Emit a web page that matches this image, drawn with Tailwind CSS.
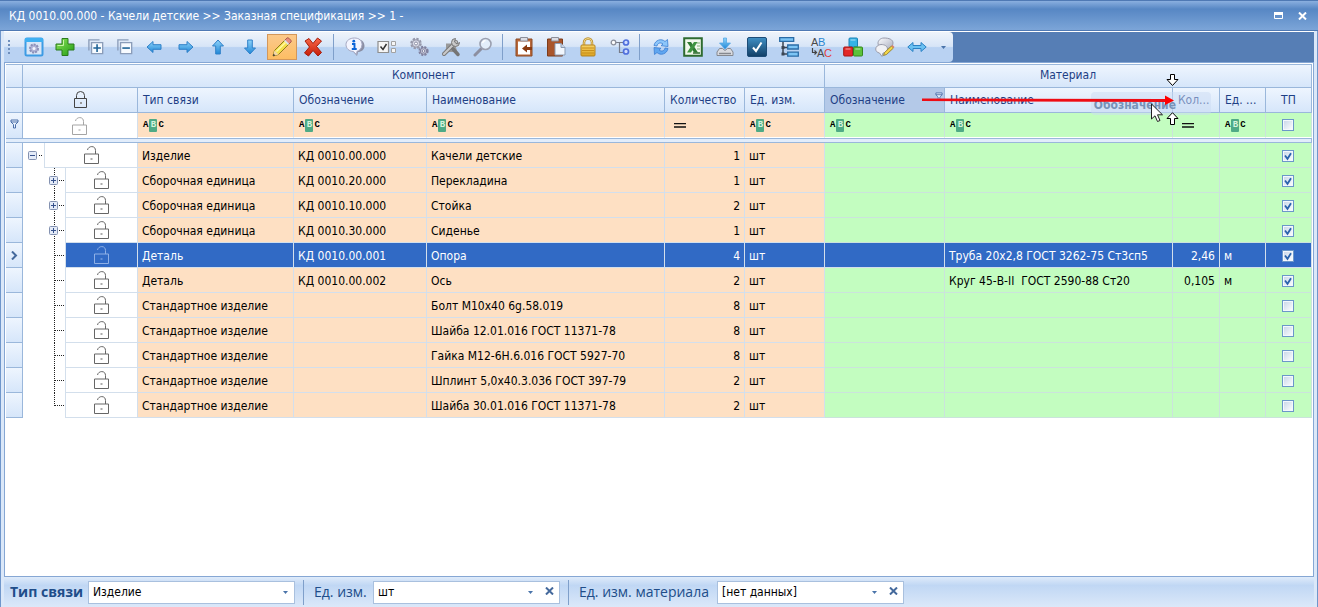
<!DOCTYPE html>
<html lang="ru">
<head>
<meta charset="utf-8">
<meta name="viewport" content="width=device-width, initial-scale=1">
<title>КД 0010.00.000 - Качели детские</title>
<script src="https://cdn.jsdelivr.net/npm/@tailwindcss/browser@4"></script>
</head>
<body class="flex min-h-screen flex-col bg-[#dbe8f9] text-xs text-black [font-family:'DejaVu_Sans_Condensed','DejaVu_Sans',sans-serif]">

<svg class="absolute size-0" aria-hidden="true">
  <defs>
    <linearGradient id="blue" x1="0" y1="0" x2="0" y2="1"><stop offset="0" stop-color="#8fd4fa"/><stop offset="1" stop-color="#1f86d6"/></linearGradient>
    <linearGradient id="green" x1="0" y1="0" x2="1" y2="1"><stop offset="0" stop-color="#8fe65a"/><stop offset="1" stop-color="#1f9a14"/></linearGradient>
    <linearGradient id="red" x1="0" y1="0" x2="0" y2="1"><stop offset="0" stop-color="#f9694a"/><stop offset="1" stop-color="#c61c08"/></linearGradient>
    <linearGradient id="gold" x1="0" y1="0" x2="0" y2="1"><stop offset="0" stop-color="#f7d469"/><stop offset="1" stop-color="#dba21f"/></linearGradient>
    <linearGradient id="navy" x1="0" y1="0" x2="0" y2="1"><stop offset="0" stop-color="#3f8fc4"/><stop offset="1" stop-color="#123f66"/></linearGradient>
    <linearGradient id="grey" x1="0" y1="0" x2="1" y2="1"><stop offset="0" stop-color="#fdfdff"/><stop offset="1" stop-color="#a9adc0"/></linearGradient>
  </defs>
  <symbol id="lock" viewBox="0 0 15 18"><path d="M3.500 7V4.500a3.500 3.500 0 0 1 8 0V7" fill="none" stroke="#444"/><path d="M1.500 7.500h12v9h-12z" fill="none" stroke="#444"/><path d="M7 11h2v2H7z" fill="#999"/></symbol>
  <symbol id="unlock" viewBox="0 0 15 18"><path d="M3.500 4C4 1.600 6 .6 7.800 .6c2.400 0 3.700 1.600 3.700 4V8" fill="none" stroke="currentColor"/><path d="M.5 8h14v9.500h-14z" fill="none" stroke="currentColor"/><path d="M6.500 12h2v2h-2z" fill="currentColor" opacity=".55"/></symbol>
  <symbol id="funnel" viewBox="0 0 9 10"><path d="M1 1h7v2L5.500 5.500V9h-2V5.500L1 3z" fill="#eaf2fd" stroke="#4a6ea9"/><path d="M1 3h7" stroke="#4a6ea9"/></symbol>
  <symbol id="tri" viewBox="0 0 5 3"><path d="M0 0h5L2.500 3z" fill="#4a74aa"/></symbol>
  <symbol id="cross" viewBox="0 0 9 8"><path d="M1 .5l7 7M8 .5l-7 7" stroke="#44699c" stroke-width="2"/></symbol>
</svg>

<header class="flex h-[31px] shrink-0 items-center border-y border-[#4f79b4] bg-linear-to-b from-[#8aafdf] from-0% via-[#5787c4] via-28% to-[#7ca5d8] pr-1 pl-[9px] text-white">
  <h1 class="flex-1 truncate pt-px text-xs">КД 0010.00.000 - Качели детские &gt;&gt; Заказная спецификация &gt;&gt; 1 -</h1>
  <button type="button" aria-label="Развернуть" class="flex h-5 w-6 items-center justify-center"><svg class="h-2 w-[9px]" viewBox="0 0 9 8"><path d="M.5.500h8v6h-8z" fill="none" stroke="#fff"/><path d="M0 0h9v3H0z" fill="#fff"/></svg></button>
  <button type="button" aria-label="Закрыть" class="flex h-5 w-6 items-center justify-center"><svg class="h-2 w-[9px]" viewBox="0 0 9 8"><path d="M1 .5l7 7M8 .5l-7 7" stroke="#fff" stroke-width="2"/></svg></button>
</header>

<div class="flex flex-1 flex-col border-x border-[#6f96cb] px-[3px]">
  <div class="flex h-[31px] shrink-0 border-t border-white bg-[#567eb5]">
    <div role="toolbar" class="flex items-center rounded-r-sm bg-linear-to-b from-[#eff4fb] from-0% via-[#d7e5f7] via-48% to-[#b9d2f2] to-52%" id="toolbar">
      <svg class="mr-[7px] ml-1 h-[15px] w-[3px]" viewBox="0 0 3 15"><path d="M1 0v15" stroke="#6f8fbd" stroke-width="2" stroke-dasharray="2 2"/></svg>
      <button type="button" aria-label="Настройки" class="flex h-7 w-8 items-center justify-center"><svg class="size-5" viewBox="0 0 20 20"><rect x="1.500" y="1.500" width="17" height="17" rx="1.500" fill="#d9e6f7" stroke="#3d9be4" stroke-width="2"/><path d="M1 1h18v4H1z" fill="#3fb0f2"/><circle cx="10" cy="11.500" r="4" fill="#aeb3d6" stroke="#8b8fb8" stroke-width="2" stroke-dasharray="2 1"/><circle cx="10" cy="11.500" r="1.500" fill="#f4f6ff"/></svg></button>
      <button type="button" aria-label="Добавить" class="flex h-7 w-[30px] items-center justify-center"><svg class="size-5" viewBox="0 0 20 20"><path d="M7 1.500h6V7h6v6h-6v5.500H7V13H1V7h6z" fill="url(#green)" stroke="#2b7a1c" stroke-linejoin="round"/><path d="M8.500 3v5.500h-6" fill="none" stroke="#c6f5a4"/></svg></button>
      <button type="button" aria-label="Развернуть все" class="flex h-7 w-[31px] items-center justify-center"><svg class="size-4" viewBox="0 0 18 18"><path d="M1 13V1h12" fill="none" stroke="#8b9db9" stroke-width="1.500"/><path d="M4 4h12.500v12.500H4z" fill="#f7fbff" stroke="#8b9db9" stroke-width="1.500"/><path d="M6 10.200h8.500M10.200 6v8.500" stroke="#1f6396" stroke-width="1.800"/></svg></button>
      <button type="button" aria-label="Свернуть все" class="flex h-7 w-[27px] items-center justify-center"><svg class="size-4" viewBox="0 0 18 18"><path d="M1 13V1h12" fill="none" stroke="#8b9db9" stroke-width="1.500"/><path d="M4 4h12.500v12.500H4z" fill="#f7fbff" stroke="#8b9db9" stroke-width="1.500"/><path d="M6 10.200h8.500" stroke="#1f6396" stroke-width="1.800"/></svg></button>
      <button type="button" aria-label="Влево" class="flex h-7 w-8 items-center justify-center"><svg class="size-4" viewBox="0 0 16 16"><path d="M1 8l6-5.500v3.200h8v4.600H7v3.200z" fill="url(#blue)" stroke="#2f80c8" stroke-linejoin="round"/></svg></button>
      <button type="button" aria-label="Вправо" class="flex h-7 w-8 items-center justify-center"><svg class="size-4" viewBox="0 0 16 16"><path d="M15 8L9 2.500v3.200H1v4.600h8v3.200z" fill="url(#blue)" stroke="#2f80c8" stroke-linejoin="round"/></svg></button>
      <button type="button" aria-label="Вверх" class="flex h-7 w-8 items-center justify-center"><svg class="size-4" viewBox="0 0 16 16"><path d="M8 1l5.500 6h-3.200v8H5.700V7H2.500z" fill="url(#blue)" stroke="#2f80c8" stroke-linejoin="round"/></svg></button>
      <button type="button" aria-label="Вниз" class="flex h-7 w-8 items-center justify-center"><svg class="size-4" viewBox="0 0 16 16"><path d="M8 15l5.500-6h-3.200V1H5.700v8H2.500z" fill="url(#blue)" stroke="#2f80c8" stroke-linejoin="round"/></svg></button>
      <button type="button" aria-label="Редактировать" aria-pressed="true" class="ml-px flex h-[26px] w-[30px] items-center justify-center border border-[#d3975a] bg-linear-to-b from-[#fbc98b] to-[#fdbd63]"><svg class="size-[22px]" viewBox="0 0 22 22"><path d="M2 20l1.500-5.500L15.500 2.500l4 4L7.500 18.500z" fill="#f4e04a" stroke="#8f7a1c"/><path d="M14 4l1.800-1.800q1-1 2 0l2 2q1 1 0 2L18 8z" fill="#e98b7d" stroke="#a8574b"/><path d="M13 5l4 4 1.200-1.200-4-4z" fill="#dfe3ea"/><path d="M2 20l1.500-5.500 4 4z" fill="#f3d7a5"/><path d="M2 20l.6-2.200 1.600 1.600z" fill="#222"/><path d="M5.500 15.500l9-9" stroke="#fff9a8" stroke-width="1.500"/></svg></button>
      <button type="button" aria-label="Удалить" class="flex h-7 w-8 items-center justify-center"><svg class="size-5" viewBox="0 0 20 20"><path d="M2 4l4-2.500 4 5 4.500-5.500L18.500 4 13.500 9.500l5 6-3.500 3.500-5-5.500L5.500 19 1.500 16 6.500 10z" fill="url(#red)" stroke="#a51c0c" stroke-linejoin="round"/></svg></button>
      <span class="mr-[5px] ml-1 h-[26px] w-px bg-[#7f9fca]"></span>
      <button type="button" aria-label="Информация" class="flex h-7 w-8 items-center justify-center"><svg class="size-5" viewBox="0 0 20 20"><path d="M11 2c5 0 8.500 2.500 8.500 7S15 15 13 15l-1 4-4-4.500z" fill="#8a8ea3"/><path d="M9.500 1C14 1 17 3.500 17 7.500S14 14 12 14.300l-.5 3.200L8.300 14.500C4 14.200 1 11.500 1 7.500S5 1 9.500 1z" fill="#f4f5ff" stroke="#a5a8c2"/><circle cx="8.800" cy="4.200" r="1.400" fill="#0b64d8"/><path d="M7 7h2.500v5M6.800 12h4.900" stroke="#0b64d8" stroke-width="1.900" fill="none"/></svg></button>
      <button type="button" aria-label="Отметить" class="flex h-7 w-8 items-center justify-center"><svg class="h-[14px] w-5" viewBox="0 0 20 14"><path d="M1 1.500h10.500v11H1z" fill="#f6f6f6" stroke="#8e8e8e" stroke-width="1.200"/><path d="M3.500 6.500l2.500 3L9.500 4" fill="none" stroke="#333" stroke-width="1.500"/><path d="M14.500 1.500h4v4h-4zM14.500 8.500h4v4h-4z" fill="#f6f6f6" stroke="#a2a2a2"/></svg></button>
      <button type="button" aria-label="Параметры" class="flex h-7 w-8 items-center justify-center"><svg class="size-5" viewBox="0 0 20 20"><circle cx="7" cy="6.500" r="4.500" fill="#c5c7d4" stroke="#9698aa" stroke-width="2.500" stroke-dasharray="2.200 1.300"/><circle cx="7" cy="6.500" r="3.700" fill="#d9dae6" stroke="#9698aa"/><circle cx="7" cy="6.500" r="1.500" fill="#fff" stroke="#8d8fa5"/><circle cx="14.500" cy="14" r="4" fill="#c5c7d4" stroke="#8082a0" stroke-width="2.300" stroke-dasharray="2 1.200"/><circle cx="14.500" cy="14" r="3.200" fill="#c3c5d6" stroke="#8082a0"/><circle cx="14.500" cy="14" r="1.300" fill="#fff" stroke="#8082a0"/></svg></button>
      <button type="button" aria-label="Инструменты" class="flex h-7 w-8 items-center justify-center"><svg class="size-5" viewBox="0 0 20 20"><path d="M5 6.500h10v4l2.500 7.500-5-3H8l-6 2 3-5z" fill="#9a9a9a"/><path d="M3 17L15 5" stroke="#777" stroke-width="4" stroke-linecap="round"/><path d="M3 17L15 5" stroke="#c9c9c9" stroke-width="2.200" stroke-linecap="round"/><path d="M14.500 1.500a4 4 0 1 0 4 4L16 7l-2.500-2z" fill="#c9c9c9" stroke="#777"/><path d="M12 12l5 5.500" stroke="#757575" stroke-width="3.500" stroke-linecap="round"/></svg></button>
      <button type="button" aria-label="Поиск" class="flex h-7 w-8 items-center justify-center"><svg class="size-5" viewBox="0 0 20 20"><path d="M2 18l6-6" stroke="#8c8fa0" stroke-width="3" stroke-linecap="round"/><circle cx="12.500" cy="7" r="5.500" fill="#e3eefb" stroke="#9ba0b0" stroke-width="1.600"/><path d="M9.500 6a3.500 3.500 0 0 1 3-2.500" stroke="#fff" stroke-width="1.500" fill="none"/></svg></button>
      <span class="mr-[5px] ml-[3px] h-[26px] w-px bg-[#7f9fca]"></span>
      <button type="button" aria-label="Вырезать" class="flex h-7 w-8 items-center justify-center"><svg class="size-5" viewBox="0 0 20 20"><path d="M2 2h16v17H2z" fill="#b9683a" stroke="#8c4a25"/><path d="M4 4.500h12v13H4z" fill="#fff"/><path d="M6.500.500h7V4h-7z" fill="#dcdde4" stroke="#8d8e99"/><path d="M8 11.500l5-4v2.500h5v3h-5v2.500z" fill="#8a3a10"/></svg></button>
      <button type="button" aria-label="Вставить" class="flex h-7 w-8 items-center justify-center"><svg class="size-5" viewBox="0 0 20 20"><path d="M1.500 2h15v17h-15z" fill="#a9552b" stroke="#7d3c1b"/><path d="M5.500.500h7V4h-7z" fill="#dcdde4" stroke="#8d8e99"/><path d="M9 6.500h6l4 4v7.500H9z" fill="#f1f6fd" stroke="#8b9cb3"/><path d="M15 6.500v4h4" fill="#c6d6ea" stroke="#8b9cb3"/></svg></button>
      <button type="button" aria-label="Заблокировать" class="flex h-7 w-8 items-center justify-center"><svg class="size-5" viewBox="0 0 20 20"><path d="M6 9V5.500a4 4 0 0 1 8 0V9" fill="none" stroke="#b98d2d" stroke-width="2.500"/><path d="M6 9V5.500a4 4 0 0 1 8 0V9" fill="none" stroke="#f4dc8c"/><rect x="3" y="8" width="14" height="11" rx="1" fill="url(#gold)" stroke="#b58320"/><path d="M4 11h12M4 13.500h12M4 16h12" stroke="#c98f1a"/></svg></button>
      <button type="button" aria-label="Структура" class="flex h-7 w-8 items-center justify-center"><svg class="size-5" viewBox="0 0 20 20"><path d="M5 5.500h9M9.500 5.500v10H14" fill="none" stroke="#777c8a" stroke-width="1.200"/><circle cx="3.500" cy="5.500" r="2.300" fill="#fff" stroke="#8b8f9b" stroke-width="1.300"/><circle cx="16" cy="5.500" r="2.500" fill="#cfdcff" stroke="#4f6fdc" stroke-width="1.700"/><circle cx="16" cy="14.500" r="2.500" fill="#cfdcff" stroke="#4f6fdc" stroke-width="1.700"/></svg></button>
      <span class="mr-[5px] ml-[3px] h-[26px] w-px bg-[#7f9fca]"></span>
      <button type="button" aria-label="Обновить" class="flex h-7 w-8 items-center justify-center"><svg class="size-5" viewBox="0 0 20 20"><path d="M3 8.500C4 3 10.500 1 14 4.500l2.500-2 .5 7-7-.8 2-1.700C9.500 5 6.500 6 6 9z" fill="#8cc6fa" stroke="#3b7ed2" stroke-width=".8" stroke-linejoin="round"/><path d="M17 11.500c-1 5.500-7.500 7.500-11 4l-2.500 2-.5-7 7 .8-2 1.700c2.500 2 5.500 1 6-2z" fill="#5fa6f0" stroke="#3b7ed2" stroke-width=".8" stroke-linejoin="round"/></svg></button>
      <button type="button" aria-label="Экспорт в Excel" class="flex h-7 w-8 items-center justify-center"><svg class="size-5" viewBox="0 0 20 20"><path d="M1.200 1.200h17.600v17.600H1.200z" fill="#f1f8ec" stroke="#2e6b30" stroke-width="2"/><path d="M14 6h3M14 9h3M14 12h3" stroke="#7faf74"/><path d="M4 5h4l7 10.500h-4z" fill="#2f7a33"/><path d="M14.500 5h-3.500L4 15.500h4z" fill="#3f9440"/><path d="M10 16h7" stroke="#2e6b30" stroke-width="1.500"/></svg></button>
      <button type="button" aria-label="Загрузить" class="flex h-7 w-8 items-center justify-center"><svg class="size-5" viewBox="0 0 20 20"><path d="M8.500 1h3v5h4L10 12 4.500 6h4z" fill="url(#blue)" stroke="#4aa3e4" stroke-width=".7"/><path d="M4.500 11.500h3l2.500 2 2.500-2h3L18 15v3.500H2V15z" fill="#d9dbe1" stroke="#85888f"/><path d="M4 16.500h12" stroke="#85888f" stroke-width="1.500"/></svg></button>
      <button type="button" aria-label="Принять" class="flex h-7 w-8 items-center justify-center"><svg class="size-5" viewBox="0 0 20 20"><rect x=".5" y=".5" width="19" height="19" rx="1.500" fill="url(#navy)" stroke="#1d4c77"/><path d="M6 10.500l3 3.500L14.500 5.500" fill="none" stroke="#fff" stroke-width="2"/></svg></button>
      <button type="button" aria-label="Дерево" class="flex h-7 w-8 items-center justify-center"><svg class="size-5" viewBox="0 0 20 20"><path d="M4 4v13h5M4 10.500h5" fill="none" stroke="#3b4553" stroke-width="1.500"/><path d="M.7.700h14v3.600H.7zM8.700 8h10.600v4H8.700zM8.700 15.200h10.600v4H8.700z" fill="#7cc5f5" stroke="#2a6ca6" stroke-width="1.300"/><path d="M2.500 9h3v3h-3zM2.500 15.500h3v3h-3z" fill="#3b4553"/></svg></button>
      <button type="button" aria-label="Переименовать" class="flex h-7 w-8 items-center justify-center"><svg class="h-[22px] w-[22px] [font-family:'Liberation_Sans',sans-serif]" viewBox="0 0 22 22" font-size="11"><text x="1" y="10" fill="#4a4a4a">A</text><text x="8" y="10" fill="#2a86cf">B</text><text x="7" y="21" fill="#4a4a4a">A</text><text x="14" y="21" fill="#e24040">C</text><path d="M2.500 12v4.500H6M4.500 14.500l2 2-2 2" fill="none" stroke="#444" stroke-width="1.200"/></svg></button>
      <button type="button" aria-label="Материалы" class="flex h-7 w-8 items-center justify-center"><svg class="size-5" viewBox="0 0 20 20"><rect x="6" y="1" width="8.500" height="9" rx="1" fill="#35b3e6" stroke="#1b83b5"/><rect x=".7" y="10" width="9" height="9" rx="1" fill="#e32828" stroke="#a51414"/><rect x="10.500" y="10" width="9" height="9" rx="1" fill="#5cc23a" stroke="#36881c"/><path d="M7.500 3h5M2.500 12h5M12.300 12h5" stroke="#fff" stroke-opacity=".6"/></svg></button>
      <button type="button" aria-label="Комментарий" class="flex h-7 w-8 items-center justify-center"><svg class="size-5" viewBox="0 0 20 20"><path d="M9 1c5 0 9 1.500 9 5s-2 5-5 5.500L7 12C4 10 3 8 3 6s2-5 6-5z" fill="url(#grey)" stroke="#9a9cab"/><path d="M6 7.500c3.500 0 6.500 1.500 6.500 4.500S10 16 8 16l-1 3.500L4.500 16C2 15.500.7 14 .7 12S3 7.500 6 7.500z" fill="#f1f1f5" stroke="#9a9cab"/><path d="M8.500 18.500l1-3 7-6.500 2 2-7 6.500z" fill="#f3d648" stroke="#8d7420" stroke-width=".8"/><path d="M16.500 9l1-1 2 2-1 1z" fill="#e07a6a"/></svg></button>
      <button type="button" aria-label="По ширине" class="flex h-7 w-8 items-center justify-center"><svg class="size-5" viewBox="0 0 20 20"><path d="M.8 10L6 5.500v3h8v-3l5.200 4.500L14 14.500v-3H6v3z" fill="#6bc1f2" stroke="#2c82c4" stroke-linejoin="round"/></svg></button>
      <button type="button" aria-label="Ещё" class="flex h-7 w-5 items-center justify-center"><svg class="h-[3px] w-[5px]"><use href="#tri"/></svg></button>
    </div>
  </div>

  <main class="flex-1 border border-[#86a7d4] bg-white pt-px pr-px pl-px">
    <div class="relative">
      <table class="w-full table-fixed border-separate border-spacing-0 border-t border-[#9ab7db]">
        <colgroup>
          <col class="w-[17px]"><col class="w-[115px]"><col class="w-[156px]"><col class="w-[133px]"><col class="w-[238px]"><col class="w-[80px]"><col class="w-[80px]"><col class="w-[120px]"><col><col class="w-[47px]"><col class="w-[46px]"><col class="w-[46px]">
        </colgroup>
        <thead class="text-[#1e3f85] [&_th]:border-r [&_th]:border-b [&_th]:border-[#9ab7db] [&_th]:bg-linear-to-b [&_th]:from-[#eef5fe] [&_th]:to-[#d6e6fa] [&_th]:font-normal">
          <tr class="h-[23px]">
            <th></th><th colspan="6" scope="colgroup" class="pb-[3px]">Компонент</th><th colspan="5" scope="colgroup" class="pb-[3px]">Материал</th>
          </tr>
          <tr class="h-[25px] text-left [&_th]:truncate [&_th]:px-[5px]">
            <th></th>
            <th scope="col" aria-label="Блокировка"><svg class="mx-auto h-[18px] w-[15px]"><use href="#lock"/></svg></th>
            <th scope="col">Тип связи</th><th scope="col">Обозначение</th><th scope="col">Наименование</th><th scope="col">Количество</th><th scope="col">Ед. изм.</th>
            <th scope="col" class="from-[#b4c9e8]! to-[#b4c9e8]!"><span class="flex justify-between">Обозначение<svg class="-mr-1 h-[9px] w-2"><use href="#funnel"/></svg></span></th>
            <th scope="col">Наименование</th><th scope="col">Кол...</th><th scope="col">Ед. ...</th><th scope="col" class="text-center">ТП</th>
          </tr>
          <tr class="h-[25px]" id="filters"></tr>
          <tr class="h-[5px]"><td colspan="12" class="h-[5px] border-y border-r border-[#9ab7db] bg-[#e2edfb] p-0"></td></tr>
        </thead>
        <tbody id="rows"></tbody>
      </table>

      <!-- column being dragged to its new place -->
      <div class="pointer-events-none absolute top-[28px] right-[101px] h-[23px] w-[120px] rounded-sm bg-[#cbdcf3]/50"></div>
      <span class="pointer-events-none absolute top-[33px] right-[136px] font-bold text-[#7792b8]">Обозначение</span>
      <svg class="pointer-events-none absolute top-[31px] right-[138px] h-[10px] w-[253px]" viewBox="0 0 253 10"><path d="M1 3.500L246 4v3L1 6z" fill="#ee0c14"/><path d="M244 .5L253 5.500l-9 4.500z" fill="#f00"/></svg>
      <svg class="pointer-events-none absolute top-[9px] right-[133px] h-[14px] w-[13px]" viewBox="0 0 13 14"><path d="M4.500 1.500h4v5h3.500L6.500 12.500 1 6.500h3.500z" fill="#fff" stroke="#000"/></svg>
      <svg class="pointer-events-none absolute top-[48px] right-[133px] h-[14px] w-[13px]" viewBox="0 0 13 14"><path d="M4.500 12.500h4v-6h3.500L6.500.700 1 6.500h3.500z" fill="#fff" stroke="#000"/></svg>
      <svg class="pointer-events-none absolute top-[39px] right-[148px] h-[20px] w-[13px]" viewBox="0 0 13 20"><path d="M.5 1v15l3.500-3.200 2.500 5.700 2.500-1-2.500-5.700H11.500z" fill="#fff" stroke="#222"/></svg>
    </div>
  </main>

  <footer class="flex h-[30px] shrink-0 items-center bg-linear-to-b from-[#dfebfa] from-0% via-[#c0d7f4] via-28% to-[#dbe8f9] text-sm text-[#204d89] [font-family:'Open_Sans','Noto_Sans',sans-serif]">
    <label for="link" class="w-[84px] pl-[6px] font-bold">Тип связи</label>
    <div class="relative flex h-[23px] w-[207px] border border-[#a9c0de] bg-white">
      <select id="link" class="flex-1 appearance-none pl-1 text-xs text-black [font-family:'DejaVu_Sans_Condensed','DejaVu_Sans',sans-serif]"><option>Изделие</option></select>
      <svg class="pointer-events-none absolute top-[9px] right-[6px] h-[3px] w-[5px]"><use href="#tri"/></svg>
    </div>
    <span class="ml-2 h-[25px] w-px bg-[#7f9fca]"></span>
    <label for="unit" class="ml-[10px] w-[59px] whitespace-nowrap">Ед. изм.</label>
    <div class="relative flex h-[23px] w-[187px] items-center border border-[#a9c0de] bg-white">
      <select id="unit" class="flex-1 appearance-none pl-1 text-xs text-black [font-family:'DejaVu_Sans_Condensed','DejaVu_Sans',sans-serif]"><option>шт</option></select>
      <svg class="pointer-events-none absolute top-[9px] right-[26px] h-[3px] w-[5px]"><use href="#tri"/></svg>
      <button type="button" aria-label="Очистить единицу" class="flex w-5 justify-center pb-0.5"><svg class="h-2 w-[9px]"><use href="#cross"/></svg></button>
    </div>
    <span class="ml-2 h-[25px] w-px bg-[#7f9fca]"></span>
    <label for="munit" class="ml-[10px] w-[138px] whitespace-nowrap">Ед. изм. материала</label>
    <div class="relative flex h-[23px] w-[187px] items-center border border-[#a9c0de] bg-white">
      <select id="munit" class="flex-1 appearance-none pl-1 text-xs text-black [font-family:'DejaVu_Sans_Condensed','DejaVu_Sans',sans-serif]"><option>[нет данных]</option></select>
      <svg class="pointer-events-none absolute top-[9px] right-[26px] h-[3px] w-[5px]"><use href="#tri"/></svg>
      <button type="button" aria-label="Очистить единицу материала" class="flex w-5 justify-center pb-0.5"><svg class="h-2 w-[9px]"><use href="#cross"/></svg></button>
    </div>
  </footer>
</div>

<script>
  const check = (label, on) => `<label class="relative mx-auto block size-3"><input type="checkbox" aria-label="${label}" ${on ? 'checked' : ''} class="peer block size-3 appearance-none border border-[#6b97c9] bg-linear-to-br from-[#c6d5e8] to-[#ffffff] shadow-[inset_0_0_0_1px_#f4f8fd]"><svg class="pointer-events-none absolute inset-0 hidden size-3 peer-checked:block" viewBox="0 0 12 12"><path d="M3 5.500l2.500 3.300L9 3.200" fill="none" stroke="#2a63ad" stroke-width="1.800"/></svg></label>`;
  const abc = `<span class="flex items-center pt-px text-[9px]/[13px] font-bold text-black [font-family:'Liberation_Mono',monospace]"><span>A</span><span class="mx-px w-[8px] rounded-[1px] bg-[#4faa86] text-center text-[#d6f3dc]">B</span><span>C</span></span>`;
  const eq = `<svg class="ml-1 h-[5px] w-[12px]" viewBox="0 0 12 5"><path d="M0 .5h12M0 4h12" stroke="#111" stroke-width="1.500"/></svg>`;
  const peach = 'bg-[#fee0c3]', mint = 'bg-[#c3fdc0]';

  document.getElementById('filters').innerHTML =
    `<td class="border-r border-[#9ab7db] bg-linear-to-b from-[#eef5fe] to-[#d6e6fa] pb-[3px]"><svg class="mx-auto h-[10px] w-[9px]"><use href="#funnel"/></svg></td>` +
    `<td class="border-r border-[#d3dfec] pr-px text-[#a5a5a5]"><svg class="mx-auto h-[18px] w-[15px]"><use href="#unlock"/></svg></td>` +
    [abc, abc, abc, eq, abc].map(c => `<td class="border-r border-b border-[#d3dfec] border-b-white pl-[5px] ${peach}">${c}</td>`).join('') +
    [abc, abc, eq, abc].map(c => `<td class="border-r border-b border-[#cbe3dc] border-b-white pl-[5px] ${mint}">${c}</td>`).join('') +
    `<td class="border-r border-b border-[#cbe3dc] border-b-white ${mint}">${check('Фильтр ТП', false)}</td>`;

  const data = [
    ['Изделие', 'КД 0010.00.000', 'Качели детские', 1, '', '', '', 1],
    ['Сборочная единица', 'КД 0010.20.000', 'Перекладина', 1, '', '', '', 1],
    ['Сборочная единица', 'КД 0010.10.000', 'Стойка', 2, '', '', '', 1],
    ['Сборочная единица', 'КД 0010.30.000', 'Сиденье', 1, '', '', '', 1],
    ['Деталь', 'КД 0010.00.001', 'Опора', 4, 'Труба 20х2,8 ГОСТ 3262-75 Ст3сп5', '2,46', 'м', 1],
    ['Деталь', 'КД 0010.00.002', 'Ось', 2, 'Круг 45-В-II&nbsp; ГОСТ 2590-88 Ст20', '0,105', 'м', 1],
    ['Стандартное изделие', '', 'Болт М10х40 6g.58.019', 8, '', '', '', 0],
    ['Стандартное изделие', '', 'Шайба 12.01.016 ГОСТ 11371-78', 8, '', '', '', 0],
    ['Стандартное изделие', '', 'Гайка М12-6Н.6.016 ГОСТ 5927-70', 8, '', '', '', 0],
    ['Стандартное изделие', '', 'Шплинт 5,0х40.3.036 ГОСТ 397-79', 2, '', '', '', 0],
    ['Стандартное изделие', '', 'Шайба 30.01.016 ГОСТ 11371-78', 2, '', '', '', 0],
  ];

  const node = plus => `<button type="button" aria-label="${plus ? 'Развернуть' : 'Свернуть'}" class="block size-[9px]"><svg class="size-[9px]" viewBox="0 0 9 9"><rect x=".5" y=".5" width="8" height="8" rx="1" fill="#e4ebf8" stroke="#8391b0"/><path d="M2 4.500h5${plus ? 'M4.500 2v5' : ''}" stroke="#35508b"/></svg></button>`;
  const dots = 'stroke="#222" stroke-dasharray="1 1"';

  function tree(i) {
    const lock = sel => `<span class="flex flex-1 items-center justify-center border-b border-l border-[#d3dfec] ${sel ? 'bg-[#316ac5] text-[#8fb0e6]' : 'text-[#666666]'}"><svg class="h-[18px] w-[15px]"><use href="#unlock"/></svg></span>`;
    if (i === 0) return `<div class="flex h-[25px]"><span class="flex w-[21px] items-center pl-[5px]">${node(false)}<svg class="ml-[2px] h-px w-[4px]" viewBox="0 0 4 1"><path d="M0 .5h4" ${dots}/></svg></span>${lock(false)}</div>`;
    const last = i === data.length - 1, branch = i < 4;
    const lines = `<svg class="h-[25px] w-[16px]" viewBox="0 0 16 25"><path d="M5.500 0V${branch ? 7 : last ? 13 : 25}${branch ? 'M5.500 18V25' : ''}" ${dots}/><path d="M${branch ? 10 : 6} 12.500H15" ${dots}/></svg>`;
    return `<div class="flex h-[25px]"><span class="relative flex w-[42px] justify-end">${lines}${branch ? `<span class="absolute top-2 right-[7px]">${node(true)}</span>` : ''}</span>${lock(i === 4)}</div>`;
  }

  document.getElementById('rows').innerHTML = data.map((r, i) => {
    const sel = i === 4;
    const a = `truncate border-r border-b border-[#d3dfec] px-1 pt-0.5 pb-0 ${sel ? 'bg-[#316ac5]' : peach}`;
    const b = `truncate border-r border-b px-1 pt-0.5 pb-0 ${sel ? 'border-[#d3dfec] bg-[#316ac5]' : 'border-[#cbe3dc] bg-[#c3fdc0]'}`;
    return `<tr class="h-[25px] ${sel ? 'text-white' : ''}">
      <td class="border-r border-b border-[#9ab7db] bg-linear-to-b from-[#eef5fe] to-[#d6e6fa] p-0">${sel ? '<svg class="mx-auto h-[9px] w-[7px]" viewBox="0 0 7 9"><path d="M1 .5l4 4-4 4" fill="none" stroke="#44699c" stroke-width="2"/></svg>' : ''}</td>
      <td class="border-r border-[#d3dfec] p-0">${tree(i)}</td>
      <td class="${a}">${r[0]}</td><td class="${a}">${r[1]}</td><td class="${a}">${r[2]}</td><td class="${a} text-right">${r[3]}</td><td class="${a}">шт</td>
      <td class="${b}"></td><td class="${b}">${r[4]}</td><td class="${b} text-right">${r[5]}</td><td class="${b}">${r[6]}</td><td class="${b}">${check('ТП: ' + r[2], r[7])}</td>
    </tr>`;
  }).join('');
</script>
</body>
</html>
